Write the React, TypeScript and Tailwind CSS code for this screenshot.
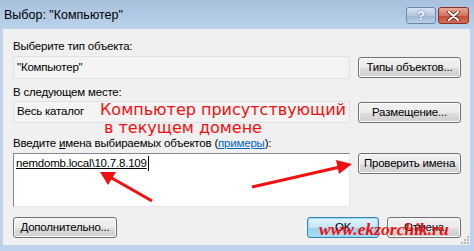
import React from "react";

const ui = { fontFamily: '"Liberation Sans", Arial, sans-serif' };

function Btn({ children, w = "w-[103px]", def = false }: { children: React.ReactNode; w?: string; def?: boolean }) {
  return (
    <div
      className={`${w} h-[21px] rounded-[3px] border flex items-center justify-center text-[11.5px] tracking-[-0.2px] text-black ${
        def
          ? "border-[#3c7fb1] bg-[linear-gradient(#e5f4fc_0%,#c4e5f6_50%,#98d1ef_51%,#b1dcf3_100%)] shadow-[inset_0_0_0_1px_#8ee1fb]"
          : "border-[#707070] bg-[linear-gradient(#f2f2f2_0%,#ebebeb_50%,#dddddd_51%,#cfcfcf_100%)] shadow-[inset_0_0_0_1px_#fcfcfc]"
      }`}
    >
      {children}
    </div>
  );
}

export default function App() {
  return (
    <div className="relative w-[474px] h-[251px] overflow-hidden bg-[#bfd4ec] flex flex-col" style={ui}>
      {/* title bar */}
      <div className="h-[29px] flex items-center justify-between pl-[4px] pr-[5px] bg-[linear-gradient(#a6c0dd,#bcd2eb)]">
        <span className="text-[12.5px] text-black mt-[1px]">Выбор: "Компьютер"</span>
        <div className="flex gap-[2px] mt-[2px]">
          <div className="w-[30px] h-[17px] rounded-[3px] border border-[#6d87a8] bg-[linear-gradient(#d7e4f3,#b3c8e0_50%,#9fb8d6_51%,#bcd0e8)] flex items-center justify-center text-white font-bold text-[13px] leading-none [text-shadow:0_0_2px_#3d5a80]">
            ?
          </div>
          <div className="w-[31px] h-[17px] rounded-[3px] border border-[#8a2f22] bg-[linear-gradient(#e9a99a,#d2735f_50%,#c14a34_51%,#d2705a)] flex items-center justify-center">
            <svg width="13" height="10" viewBox="0 0 13 10">
              <path d="M2 1 L11 9 M11 1 L2 9" stroke="#5a1a10" strokeWidth="3.6" strokeLinecap="round" />
              <path d="M2 1 L11 9 M11 1 L2 9" stroke="#ffffff" strokeWidth="2.2" strokeLinecap="round" />
            </svg>
          </div>
        </div>
      </div>

      {/* client area */}
      <div className="ml-[3px] mr-[4px] h-[216px] bg-[#f0f0f0] pl-[10px] pr-[9px] flex flex-col text-[11.5px] tracking-[-0.2px] text-black">
        <div className="mt-[10px] h-[15px] leading-[15px]">Выберите тип объекта:</div>
        <div className="mt-[2px] flex gap-[8px]">
          <div className="flex-1 h-[23px] border border-[#dfe1e6] bg-[#f3f3f3] flex items-center pl-[3px]">"Компьютер"</div>
          <div className="mt-[1px]"><Btn>Типы объектов...</Btn></div>
        </div>
        <div className="mt-[6px] h-[15px] leading-[15px]">В следующем месте:</div>
        <div className="mt-[1px] flex gap-[8px]">
          <div className="flex-1 h-[22px] border border-[#dfe1e6] bg-[#f3f3f3] flex items-center pl-[3px]">Весь каталог</div>
          <div className="mt-[1px]"><Btn>Размещение...</Btn></div>
        </div>
        <div className="mt-[13px] h-[15px] leading-[15px]">
          Введите <span className="underline">и</span>мена выбираемых объектов (<span className="text-[#0066cc] underline">примеры</span>):
        </div>
        <div className="mt-[2px] flex gap-[8px]">
          <div className="flex-1 h-[54px] border border-[#828790] border-r-[#e3e9ef] border-b-[#e3e9ef] bg-white pl-[2px] pt-[1px]">
            <span className="underline border-r border-black pr-[1px] leading-[15px] inline-block">nemdomb.local\10.7.8.109</span>
          </div>
          <div><Btn>Проверить имена</Btn></div>
        </div>
        <div className="mt-[10px] flex items-center">
          <Btn w="w-[104px]">Дополнительно...</Btn>
          <div className="flex-1" />
          <Btn w="w-[72px]" def>OK</Btn>
          <div className="w-[8px]" />
          <Btn w="w-[74px]">Отмена</Btn>
        </div>
      </div>

      {/* size grip */}
      <svg className="absolute left-[461px] top-[236px]" width="8" height="8" viewBox="0 0 8 8">
        {[
          [6, 0], [3, 3], [6, 3], [0, 6], [3, 6], [6, 6],
        ].map(([x, y], i) => (
          <rect key={i} x={x} y={y} width="2" height="2" fill="#b9b9b9" />
        ))}
      </svg>

      {/* annotations */}
      <div
        className="absolute left-[100px] top-[101px] text-[#f01010] text-[16px] leading-[18px]"
        style={{ fontFamily: '"DejaVu Sans", Verdana, sans-serif' }}
      >
        <div>Компьютер присутствующий</div>
        <div className="pl-[4px]">в текущем домене</div>
      </div>
      <svg className="absolute left-0 top-0 pointer-events-none" width="474" height="251">
        <line x1="152" y1="201" x2="110" y2="177" stroke="#f01010" strokeWidth="3" />
        <polygon points="100,172 116,172 108,185" fill="#f01010" />
        <line x1="252" y1="187" x2="340" y2="167" stroke="#f01010" strokeWidth="3" />
        <polygon points="352,164 336,160 339,174" fill="#f01010" />
      </svg>
      <div
        className="absolute left-[319px] top-[218px] text-[#f01010] text-[17.5px] italic font-bold leading-[22px]"
        style={{ fontFamily: '"Liberation Serif", "Times New Roman", serif' }}
      >
        www.ekzorchik.ru
      </div>
    </div>
  );
}
